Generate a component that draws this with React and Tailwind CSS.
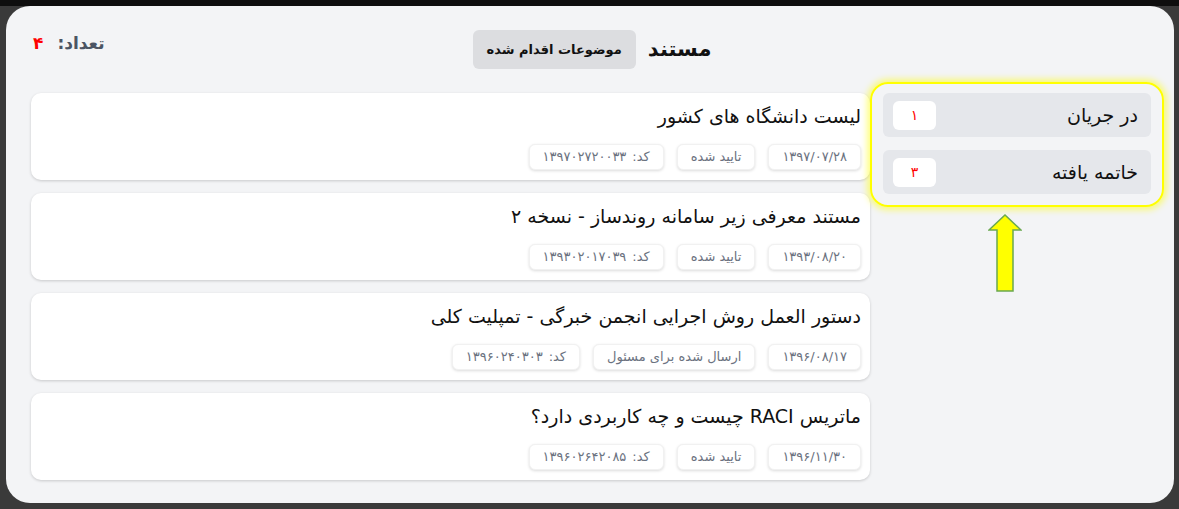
import React from 'react';

const FONT = { fontFamily: '"DejaVu Sans", "Noto Sans", sans-serif' };

// داده‌های مستندات
const docs = [
  { title: 'لیست دانشگاه های کشور', date: '۱۳۹۷/۰۷/۲۸', status: 'تایید شده', code: '۱۳۹۷۰۲۷۲۰۰۳۳' },
  { title: 'مستند معرفی زیر سامانه روندساز - نسخه ۲', date: '۱۳۹۳/۰۸/۲۰', status: 'تایید شده', code: '۱۳۹۳۰۲۰۱۷۰۳۹' },
  { title: 'دستور العمل روش اجرایی انجمن خبرگی - تمپلیت کلی', date: '۱۳۹۶/۰۸/۱۷', status: 'ارسال شده برای مسئول', code: '۱۳۹۶۰۲۴۰۳۰۳' },
  { title: 'ماتریس RACI چیست و چه کاربردی دارد؟', date: '۱۳۹۶/۱۱/۳۰', status: 'تایید شده', code: '۱۳۹۶۰۲۶۴۲۰۸۵' },
];

const filters = [
  { name: 'در جریان', count: '۱' },
  { name: 'خاتمه یافته', count: '۳' },
];

const Chip = ({ children }) => (
  <span className="h-[26px] px-[13px] flex items-center rounded-md bg-white text-[13px] text-[#6b7280] shadow-[0_1px_3px_rgba(0,0,0,0.14)] border border-[#f1f1f1] whitespace-nowrap">
    {children}
  </span>
);

const DocCard = ({ doc }) => (
  <div className="h-[87px] rounded-[10px] bg-white shadow-[0_1px_3px_rgba(0,0,0,0.18)] pr-[9px] pl-3 pt-[9px] flex flex-col">
    <h3 className="text-[19px] leading-[28px] text-[#111]">{doc.title}</h3>
    <div className="mt-[14px] flex gap-[13px]">
      <Chip>{doc.date}</Chip>
      <Chip>{doc.status}</Chip>
      <Chip>
        <span className="ml-[6px]">کد:</span>
        {doc.code}
      </Chip>
    </div>
  </div>
);

export default function App() {
  return (
    <div dir="rtl" style={FONT} className="w-[1179px] h-[509px] bg-[#3a3a3a] overflow-hidden">
      <div className="h-[6px] bg-[#0e0e0e]" />
      <div className="mx-[5px] ml-[6px] h-[497px] rounded-[24px] bg-[#f3f4f6] pr-[23px] pl-[25px] pt-[24px]">
        {/* سربرگ */}
        <div className="flex items-start h-[39px]">
          <div className="flex-1" />
          <div className="flex items-center gap-[12px]">
            <span className="text-[21px] font-bold text-[#111]">مستند</span>
            <button className="h-[39px] px-[14px] rounded-md bg-[#dcdde0] text-[13px] font-bold text-[#111]">
              موضوعات اقدام شده
            </button>
          </div>
          <div className="flex-1 flex justify-end items-center gap-[14px] pl-[2px] pt-[1px]">
            <span className="text-[17px] font-bold text-[#4b5563]">تعداد:</span>
            <span className="text-[17px] font-bold text-[#ff0000]">۴</span>
          </div>
        </div>

        {/* بدنه */}
        <div className="mt-[24px] flex gap-[13px]">
          {/* فیلترها */}
          <div className="w-[268px] shrink-0 flex flex-col">
            <div className="relative flex flex-col gap-[13px]">
              <div className="absolute -top-[11px] -bottom-[13px] -left-[13px] -right-[13px] rounded-[18px] border-2 border-[#ffff00] shadow-[0_0_6px_3px_rgba(255,255,0,0.5)] pointer-events-none" />
              {filters.map((f) => (
                <div key={f.name} className="h-[44px] rounded-md bg-[#e5e7eb] pr-[13px] pl-[10px] flex items-center justify-between">
                  <span className="text-[19px] text-[#111]">{f.name}</span>
                  <span className="w-[43px] h-[29px] rounded-md bg-white flex items-center justify-center text-[14px] text-[#ff0000]">
                    {f.count}
                  </span>
                </div>
              ))}
            </div>
            <div className="flex pr-[129px] mt-[20px]">
              <svg width="34" height="78" viewBox="0 0 34 78">
                <polygon
                  points="1,16 17,1 33,16 25,16 25,77 9,77 9,16"
                  fill="#ffff00"
                  stroke="#6aa84f"
                  strokeWidth="1.5"
                  strokeLinejoin="miter"
                />
              </svg>
            </div>
          </div>

          {/* لیست مستندات */}
          <div className="flex-1 flex flex-col gap-[13px]">
            {docs.map((d) => (
              <DocCard key={d.code} doc={d} />
            ))}
          </div>
        </div>
      </div>
    </div>
  );
}
